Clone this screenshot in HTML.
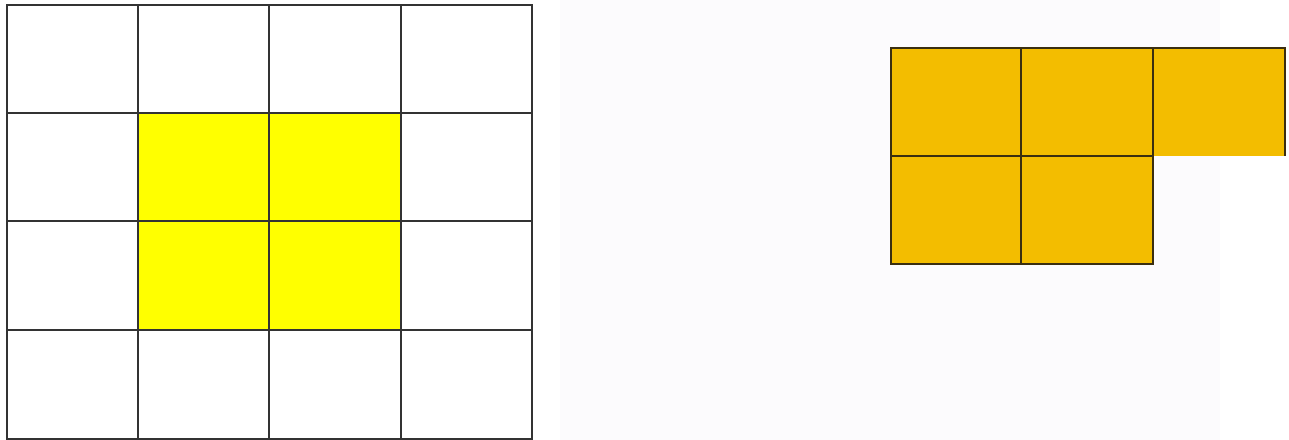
<!DOCTYPE html><html><head><style>body{margin:0;background:#fff}svg{display:block}</style></head><body>
<svg width="1289" height="440" xmlns="http://www.w3.org/2000/svg">
<rect x="0" y="0" width="1289" height="440" fill="#fff"/>
<rect x="560" y="0" width="660" height="440" fill="#fcfbfd"/>
<rect x="138" y="113" width="263" height="217" fill="#ffff00"/>
<g stroke="#333" stroke-width="2" fill="none">
<rect x="7" y="5" width="525" height="434"/>
<line x1="138" y1="5" x2="138" y2="440"/><line x1="269" y1="5" x2="269" y2="440"/><line x1="401" y1="5" x2="401" y2="440"/>
<line x1="7" y1="113" x2="532" y2="113"/><line x1="7" y1="221" x2="532" y2="221"/><line x1="7" y1="330" x2="532" y2="330"/>
</g>
<rect x="890" y="47" width="395" height="109" fill="#f3bd00"/>
<rect x="890" y="155" width="263" height="109" fill="#f3bd00"/>
<g stroke="#3a2e10" stroke-width="2" fill="none">
<path d="M1285 156 V48 H891 V264 H1153 V156 H891"/>
<line x1="1021" y1="48" x2="1021" y2="264"/>
<line x1="1153" y1="48" x2="1153" y2="156"/>
</g>
</svg>
</body></html>
